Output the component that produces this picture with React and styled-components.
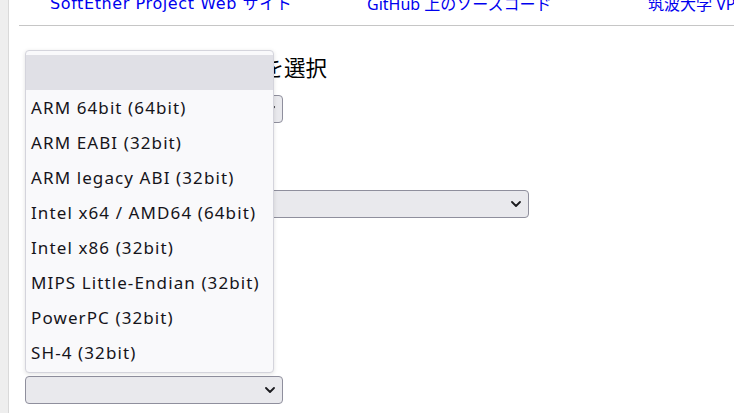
import React from 'react';
import styled, { createGlobalStyle } from 'styled-components';

const GlobalStyle = createGlobalStyle`
  html, body {
    margin: 0;
    padding: 0;
    background: #ffffff;
    overflow: hidden;
  }
  body {
    font-family: "Noto Sans", "Noto Sans CJK JP", sans-serif;
  }
`;

const Page = styled.div`
  display: flex;
  height: 413px;
  overflow: hidden;
`;

const SideStrip = styled.div`
  width: 8px;
  flex: none;
  background: #eeeeee;
  border-right: 1px solid #d9d9d9;
`;

const Main = styled.main`
  flex: 1;
  min-width: 0;
  overflow: hidden;
`;

const TopNav = styled.nav`
  display: grid;
  grid-template-columns: 317px 281px auto;
  margin-top: -6px;
  padding-left: 41px;
  white-space: nowrap;
  font-size: 16px;
  line-height: 20px;
`;

const NavLink = styled.a`
  color: #0000ee;
  text-decoration: none;
  font-family: ${(p) => (p.$wide ? '"DejaVu Sans", ' : '"Noto Sans", ')}"Noto Sans CJK JP", sans-serif;
  letter-spacing: ${(p) => (p.$wide ? '0.6px' : '0')};
`;

const Rule = styled.hr`
  margin: 11px 0 0 10px;
  border: none;
  border-top: 1px solid #c6c6c6;
`;

const Content = styled.div`
  padding: 0 0 0 16px;
`;

const Section = styled.section`
  display: flex;
  flex-direction: column;
  align-items: flex-start;
`;

const Heading = styled.h3`
  margin: ${(p) => (p.$first ? '27px' : '25px')} 0 14px 1px;
  font-family: "Noto Sans CJK JP", sans-serif;
  font-size: 21.5px;
  font-weight: 400;
  line-height: 28px;
  color: #000;
  white-space: nowrap;
`;

const SelectWrap = styled.div`
  position: relative;
`;

const SelectBox = styled.div`
  box-sizing: border-box;
  display: flex;
  align-items: center;
  justify-content: flex-end;
  width: ${(p) => p.$width}px;
  height: ${(p) => p.$height || 28}px;
  padding-right: 7px;
  background: #e9e9ed;
  border: 1px solid #8f8f9d;
  border-radius: 4px;
`;

const Popup = styled.ul`
  position: absolute;
  left: 0;
  bottom: calc(100% + 3px);
  box-sizing: border-box;
  width: 249px;
  margin: 0;
  padding: 4px 0 2px;
  list-style: none;
  background: #f9f9fb;
  border: 1px solid #d4d4dc;
  border-radius: 4px;
  box-shadow: 0 1px 4px rgba(0, 0, 0, 0.12);
`;

const Option = styled.li`
  height: 35px;
  padding-left: 5px;
  display: flex;
  align-items: center;
  font-family: "Noto Sans", sans-serif;
  font-size: 17px;
  letter-spacing: 1.1px;
  color: #15141a;
  white-space: nowrap;
  background: ${(p) => (p.$active ? '#e0e0e6' : 'transparent')};
`;

const Chevron = () => (
  <svg width="10" height="6" viewBox="0 0 10 6" fill="none">
    <path d="M1 1l4 4 4-4" stroke="#1b1b1f" strokeWidth="1.8" strokeLinecap="round" strokeLinejoin="round" />
  </svg>
);

const cpus = [
  '',
  'ARM 64bit (64bit)',
  'ARM EABI (32bit)',
  'ARM legacy ABI (32bit)',
  'Intel x64 / AMD64 (64bit)',
  'Intel x86 (32bit)',
  'MIPS Little-Endian (32bit)',
  'PowerPC (32bit)',
  'SH-4 (32bit)',
];

const App = () => (
  <>
    <GlobalStyle />
    <Page>
      <SideStrip />
      <Main>
        <TopNav>
          <NavLink href="#" $wide>SoftEther Project Web サイト</NavLink>
          <NavLink href="#">GitHub 上のソースコード</NavLink>
          <NavLink href="#">筑波大学 VPN Gate</NavLink>
        </TopNav>
        <Rule />
        <Content>
          <Section>
            <Heading $first>ダウンロードするソフトを選択</Heading>
            <SelectWrap>
              <SelectBox $width={258}>
                <Chevron />
              </SelectBox>
            </SelectWrap>
          </Section>
          <Section>
            <Heading>コンポーネントを選択</Heading>
            <SelectWrap>
              <SelectBox $width={504}>
                <Chevron />
              </SelectBox>
            </SelectWrap>
          </Section>
          <Section>
            <Heading>プラットフォームを選択</Heading>
            <SelectWrap>
              <SelectBox $width={200} $height={24}>
                <Chevron />
              </SelectBox>
            </SelectWrap>
          </Section>
          <Section>
            <Heading>CPU を選択</Heading>
            <SelectWrap>
              <SelectBox $width={258}>
                <Chevron />
              </SelectBox>
              <Popup>
                {cpus.map((c, i) => (
                  <Option key={i} $active={i === 0}>
                    {c}
                  </Option>
                ))}
              </Popup>
            </SelectWrap>
          </Section>
        </Content>
      </Main>
    </Page>
  </>
);

export default App;
